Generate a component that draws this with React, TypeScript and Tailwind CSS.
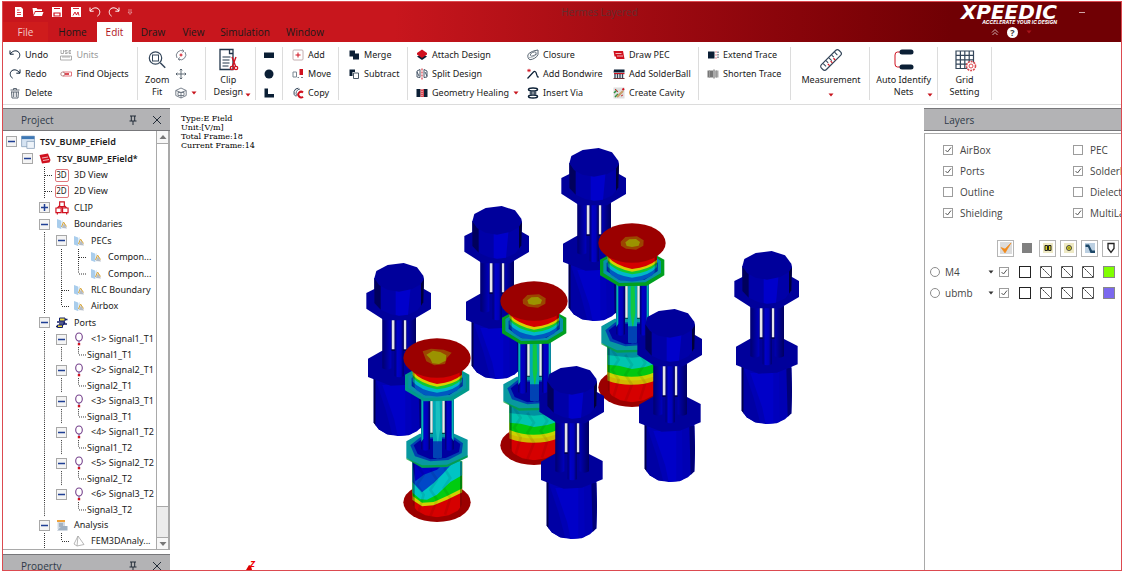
import type { ReactNode } from "react";

const navy = "#0b1f35";
const red = "#d0111f";

type IconProps = { children: ReactNode; size?: string; box?: string };

const Icon = ({ children, size = "size-3", box = "0 0 12 12" }: IconProps) => (
  <svg viewBox={box} className={`${size} shrink-0`} fill="none" aria-hidden="true">
    {children}
  </svg>
);

const UndoIcon = ({ color = navy }) => (
  <Icon>
    <path d="M1 1.500v3.700h3.700M1.300 5C3 2.200 6.500.9 9 2.600c2.600 1.800 2.300 5.800-.6 7.600" stroke={color} />
  </Icon>
);

const RedoIcon = ({ color = navy }) => (
  <Icon>
    <path d="M11 1.500v3.700H7.300M10.700 5C9 2.200 5.500.9 3 2.600.4 4.400.7 8.400 3.600 10.200" stroke={color} />
  </Icon>
);

const Caret = ({ color = "#c8141d" }) => (
  <Icon size="size-1.5" box="0 0 6 6">
    <path d="M.5 1.500h5L3 4.500z" fill={color} />
  </Icon>
);

const icons = {
  trash: (
    <Icon>
      <path d="M1.500 3h9M4.500 3V1.500h3V3M2.500 4.500l.5 6.500h6l.5-6.500M4.700 5v5M7.300 5v5M2.500 5h7" stroke="#5c6773" />
    </Icon>
  ),
  units: (
    <Icon>
      <path d="M1 1v3.500h2.500V1M7.500 1.500H5V3h2.200v1.500H5M11 4.500H9v-3h2M9 3h2" stroke="#999" strokeWidth=".8" />
      <path d="M.5 7h11v4H.5zM3 7v2M5 7v2M7 7v2M9 7v2" stroke="#999" strokeWidth=".8" />
    </Icon>
  ),
  find: (
    <Icon>
      <path d="M3 4h8.500v4H3" stroke="#e2777e" />
      <circle cx="2.800" cy="6" r="2" stroke="#b88" />
      <path d="M5 6h4" stroke={red} strokeWidth="1.500" />
    </Icon>
  ),
  rotate: (
    <Icon>
      <path d="M2 9a5 5 0 0 1 6.500-7M10 3a5 5 0 0 1-6.500 7.200" stroke="#6b7480" strokeWidth=".9" />
      <path d="M7 .5l2 1.500-1.500 1.500M5 8.500L3 10l2 1.500" stroke="#6b7480" strokeWidth=".8" />
      <path d="M6 4.500v3M4.500 6h3" stroke={red} />
    </Icon>
  ),
  pan: (
    <Icon>
      <path d="M6 1v10M1 6h10M4.700 2.300L6 1l1.300 1.300M4.700 9.700L6 11l1.300-1.300M2.300 4.700L1 6l1.300 1.300M9.700 4.700L11 6 9.700 7.300" stroke="#4f5b68" strokeWidth=".9" />
    </Icon>
  ),
  cube: (
    <Icon>
      <path d="M.8 3.500L6 1l5.200 2.500v5L6 11 .8 8.500zM.8 3.500L6 5.500l5.200-2M6 5.500V11M3 5.500h6v3H3z" stroke="#6b7480" strokeWidth=".9" />
    </Icon>
  ),
  rect: <Icon><path d="M1 3.500h10v5.500H1z" fill={navy} /></Icon>,
  circle: <Icon><circle cx="6" cy="6" r="4.500" fill={navy} /></Icon>,
  ell: <Icon><path d="M1.500 1.500H5v5.500h6v3.500H1.500z" fill={navy} /></Icon>,
  add: (
    <Icon>
      <rect x="1" y="1" width="10" height="10" rx="1" stroke="#b59a9d" strokeWidth=".8" />
      <path d="M6 3.500v5M3.500 6h5" stroke={red} />
    </Icon>
  ),
  move: (
    <Icon>
      <path d="M1 4h3.500v5H1z" stroke="#7b8791" />
      <path d="M7.500 1H11v6H7.500z" fill={red} />
      <path d="M5.500 9.500h1.500M9 9.500h2" stroke="#7b8791" />
    </Icon>
  ),
  copy: (
    <Icon>
      <path d="M6.500 1.200A4.500 4.500 0 0 0 4 9.500" stroke="#34465a" />
      <path d="M8 2A4.300 4.300 0 0 0 5 9" stroke="#34465a" strokeWidth=".8" />
      <path d="M11 5.500A2.800 2.800 0 1 0 11 9.700" stroke={red} strokeWidth="2" />
    </Icon>
  ),
  merge: <Icon><path d="M1.500 1.500H7V4.500h4v6H5V7.500H1.500z" fill={navy} /></Icon>,
  subtract: (
    <Icon>
      <path d="M1.500 1.500H7V4H4.500v4h-3z" fill={navy} />
      <path d="M5.500 5h5v5.500h-5z" stroke="#4a5866" />
    </Icon>
  ),
  attach: (
    <Icon>
      <path d="M1 7.500L6 11l5-3.500L6 5z" fill={navy} />
      <path d="M1 4l5-3.500L11 4v1.500L6 9 1 5.500z" fill={red} />
    </Icon>
  ),
  split: (
    <Icon>
      <path d="M1 3l3-1.500v8L1 9zM8 1.500L11 3v6L8 9.500zM1 4l2 4M9 4l2 4" stroke="#34465a" strokeWidth=".9" />
      <path d="M6 .5v11" stroke={red} strokeDasharray="2 1" />
    </Icon>
  ),
  healing: (
    <Icon>
      <path d="M.5 2h4v8h-4zM8 2h3.500v8H8z" fill={navy} />
      <path d="M4.500 2H8v8H4.500z" fill="#d94b55" />
      <path d="M6 2v8" stroke="#fff" strokeDasharray="1 1" strokeWidth=".8" />
    </Icon>
  ),
  closure: (
    <Icon>
      <path d="M1 5.500C3 3 7 1.500 11 1v4.500c-1 3-5 5-8 5.200-2-.7-2.500-3-2-5.200z" stroke="#566370" />
      <ellipse cx="6.300" cy="5" rx="3.200" ry="1.700" transform="rotate(-25 6.300 5)" stroke="#566370" strokeWidth=".8" />
      <path d="M2 8.500c3 0 6-1 8.500-4" stroke="#96a0a8" strokeWidth=".8" />
    </Icon>
  ),
  bondwire: (
    <Icon>
      <path d="M.5 10.500L6.500 4c1-1 2-.5 2.500.5l1.500 4.500h1.500" stroke={navy} strokeWidth="1.200" />
      <path d="M2 .8v3.400M.3 2.500h3.400M.8 1.300l2.400 2.400M3.200 1.300L.8 3.700" stroke={red} strokeWidth=".8" />
    </Icon>
  ),
  via: (
    <Icon>
      <ellipse cx="6" cy="2.500" rx="4.500" ry="1.500" stroke={navy} strokeWidth="1.500" />
      <ellipse cx="6" cy="9.500" rx="4.500" ry="1.500" stroke={navy} strokeWidth="1.500" />
      <path d="M4 4v4M8 4v4M2.500 6h7" stroke={navy} />
    </Icon>
  ),
  pec: (
    <Icon>
      <path d="M.5 2h9.500L11.500 10H3.500L2.800 7.500H1.500z" fill={red} />
      <path d="M2.500 4.500h6M4 7h6" stroke="#fff" strokeWidth=".7" />
    </Icon>
  ),
  solder: (
    <Icon>
      <path d="M1 1.500h10.500v3H.5z" fill={navy} />
      <path d="M1 5h10.500v1.200H1z" fill={red} />
      <path d="M2 6v4M4.500 6v4M7 6v4M9.500 6v4" stroke="#34465a" strokeWidth="1.400" />
      <path d="M.5 10.500h11" stroke="#6b3338" />
    </Icon>
  ),
  cavity: (
    <Icon>
      <rect x=".5" y=".5" width="11" height="11" fill="#dedede" />
      <path d="M2 10l3-3M1 6l3-3" stroke="#2d9140" strokeWidth="1.500" />
      <path d="M4 10l6-6" stroke="#c9a06a" strokeWidth="2.200" />
      <path d="M2 2l3 3M8 9l2-1" stroke="#c33" />
      <path d="M9.500 3l1.500-1.500" stroke={red} strokeWidth="2" />
    </Icon>
  ),
  extend: (
    <Icon>
      <path d="M1 2.500h6.500v7H1z" fill={navy} />
      <path d="M9 2.500v1M9 5.500v1M9 8.500v1" stroke={red} />
      <path d="M11 2.500v7" stroke="#34465a" strokeDasharray="1.500 1" />
    </Icon>
  ),
  shorten: (
    <Icon>
      <path d="M.5 2.500H6v7H.5z" fill="#777" />
      <path d="M8 2.500h3.500v7H8z" fill="#aaa" />
      <path d="M7 1.500v9" stroke="#555" />
      <path d="M2.500 2.500v7M9.500 2.500v7" stroke="#999" />
    </Icon>
  ),
  zoomFit: (
    <Icon size="size-5" box="0 0 20 20">
      <circle cx="8.500" cy="8" r="6.200" stroke="#34465a" strokeWidth="1.200" />
      <path d="M13.200 12.700l5 5" stroke="#34465a" strokeWidth="1.500" />
      <rect x="5.500" y="5" width="6" height="6" stroke="#34465a" />
    </Icon>
  ),
  clip: (
    <Icon size="size-6" box="0 0 24 24">
      <path d="M4 1.500h13v20H4zM13.500 1.500v4h3.500" stroke="#22364b" strokeWidth="1.300" />
      <path d="M6.500 9h8M6.500 12h7M6.500 15h7M6.500 18h6" stroke="#22364b" strokeWidth="1.200" />
      <path d="M16 9l3.500 9M20 9l-3.500 9" stroke={red} strokeWidth="1.400" />
      <circle cx="16" cy="20" r="1.700" stroke={red} strokeWidth="1.300" />
      <circle cx="20" cy="20" r="1.700" stroke={red} strokeWidth="1.300" />
    </Icon>
  ),
  ruler: (
    <Icon size="size-6" box="0 0 24 24">
      <g transform="rotate(-45 12 12)">
        <rect x="-.5" y="8.500" width="25" height="7" rx="2.500" stroke="#34465a" strokeWidth="1.200" />
        <path d="M4 9v4M8 9v3M12 9v4M16 9v3M20 9v4" stroke="#34465a" />
        <path d="M7 12.500v2.500M11 12.500v2.500M15 12.500v2.500" stroke={red} strokeWidth="1.200" />
      </g>
    </Icon>
  ),
  nets: (
    <Icon size="size-6" box="0 0 24 24">
      <path d="M8 4H5.500Q3 4 3 7v9q0 3 2.500 3H8" stroke={red} />
      <rect x="7.500" y="1.500" width="14" height="5" rx="2.500" fill={navy} />
      <rect x="7.500" y="16.500" width="14" height="5" rx="2.500" fill={navy} />
    </Icon>
  ),
  gridSetting: (
    <Icon size="size-6" box="0 0 24 24">
      <path d="M3 3h17.500v17.500H3zM7.400 3v17.500M11.800 3v17.500M16.200 3v17.500M3 7.400h17.500M3 11.800h17.500M3 16.200h17.500" stroke="#34465a" strokeWidth="1.200" />
      <circle cx="18" cy="18" r="4.500" fill="#fff" stroke="#dc4a50" strokeWidth="1.600" strokeDasharray="2 .9" />
      <circle cx="18" cy="18" r="2" stroke="#dc4a50" />
    </Icon>
  ),
};

const RibbonButton = ({ icon, label, muted, caret }: { icon: ReactNode; label: string; muted?: boolean; caret?: boolean }) => (
  <button type="button" className={`flex h-[19px] items-center gap-1 whitespace-nowrap ${muted ? "text-[#9a9a9a]" : ""}`}>
    {icon}
    {label}
    {caret && <Caret />}
  </button>
);

const LargeButton = ({ icon, lines }: { icon: ReactNode; lines: string[] }) => (
  <button type="button" className="flex flex-col items-center leading-3 whitespace-nowrap">
    <span className="flex h-[29px] items-center">{icon}</span>
    {lines.map((line) => (
      <span key={line}>{line}</span>
    ))}
  </button>
);

const IconButton = ({ label, children }: { label: string; children: ReactNode }) => (
  <button type="button" aria-label={label} className="flex h-[19px] items-center">
    {children}
  </button>
);

const Divider = () => <div className="my-1 w-px shrink-0 bg-[#dcdcdc]" />;

const Ribbon = () => (
  <div className="flex h-[63px] shrink-0 overflow-hidden border-b border-[#dcdcdc] bg-white pt-px font-['Noto_Sans',sans-serif] text-[9px]">
    <div className="flex w-[134px] shrink-0 gap-2 pt-0.5 pl-1.5">
      <div>
        <RibbonButton icon={<UndoIcon />} label="Undo" />
        <RibbonButton icon={<RedoIcon />} label="Redo" />
        <RibbonButton icon={icons.trash} label="Delete" />
      </div>
      <div>
        <RibbonButton icon={icons.units} label="Units" muted />
        <RibbonButton icon={icons.find} label="Find Objects" />
      </div>
    </div>
    <Divider />
    <div className="flex w-[67px] shrink-0 gap-1.5 pt-0.5 pl-[7px]">
      <LargeButton icon={icons.zoomFit} lines={["Zoom", "Fit"]} />
      <div>
        <IconButton label="Rotate">{icons.rotate}</IconButton>
        <IconButton label="Pan">{icons.pan}</IconButton>
        <button type="button" aria-label="View cube" className="flex h-[19px] items-center gap-1">
          {icons.cube}
          <Caret />
        </button>
      </div>
    </div>
    <Divider />
    <div className="flex w-[49px] shrink-0 items-end justify-end gap-0.5 self-start pt-0.5 pr-1">
      <LargeButton icon={icons.clip} lines={["Clip", "Design"]} />
      <Caret />
    </div>
    <Divider />
    <div className="flex w-[26px] shrink-0 flex-col items-center pt-0.5">
      <IconButton label="Rectangle">{icons.rect}</IconButton>
      <IconButton label="Circle">{icons.circle}</IconButton>
      <IconButton label="Polygon">{icons.ell}</IconButton>
    </div>
    <Divider />
    <div className="w-[55px] shrink-0 pt-0.5 pl-[9px]">
      <RibbonButton icon={icons.add} label="Add" />
      <RibbonButton icon={icons.move} label="Move" />
      <RibbonButton icon={icons.copy} label="Copy" />
    </div>
    <Divider />
    <div className="w-[68px] shrink-0 pt-0.5 pl-[9px]">
      <RibbonButton icon={icons.merge} label="Merge" />
      <RibbonButton icon={icons.subtract} label="Subtract" />
    </div>
    <Divider />
    <div className="flex w-[290px] shrink-0 pt-0.5 pl-2">
      <div className="w-[111px]">
        <RibbonButton icon={icons.attach} label="Attach Design" />
        <RibbonButton icon={icons.split} label="Split Design" />
        <RibbonButton icon={icons.healing} label="Geometry Healing" caret />
      </div>
      <div className="w-[86px]">
        <RibbonButton icon={icons.closure} label="Closure" />
        <RibbonButton icon={icons.bondwire} label="Add Bondwire" />
        <RibbonButton icon={icons.via} label="Insert Via" />
      </div>
      <div>
        <RibbonButton icon={icons.pec} label="Draw PEC" />
        <RibbonButton icon={icons.solder} label="Add SolderBall" />
        <RibbonButton icon={icons.cavity} label="Create Cavity" />
      </div>
    </div>
    <Divider />
    <div className="w-[91px] shrink-0 pt-0.5 pl-2">
      <RibbonButton icon={icons.extend} label="Extend Trace" />
      <RibbonButton icon={icons.shorten} label="Shorten Trace" />
    </div>
    <Divider />
    <div className="flex w-[78px] shrink-0 flex-col items-center pt-0.5 pl-0.5">
      <LargeButton icon={icons.ruler} lines={["Measurement"]} />
      <span className="flex h-3 items-end">
        <Caret />
      </span>
    </div>
    <Divider />
    <div className="flex w-[67px] shrink-0 items-end justify-end self-start pt-0.5 pr-1">
      <LargeButton icon={icons.nets} lines={["Auto Identify", "Nets"]} />
      <span className="-ml-1">
        <Caret />
      </span>
    </div>
    <Divider />
    <div className="flex w-[53px] shrink-0 justify-center pt-0.5">
      <LargeButton icon={icons.gridSetting} lines={["Grid", "Setting"]} />
    </div>
    <Divider />
  </div>
);

const tabs = [
  { name: "File", style: "w-[45px] bg-[#cf1c1c] text-[#f3c9c9]" },
  { name: "Home", style: "w-[49px]" },
  { name: "Edit", style: "w-[35px] bg-white text-[#b0141b]" },
  { name: "Draw", style: "w-[42px]" },
  { name: "View", style: "w-[39px]" },
  { name: "Simulation", style: "w-16" },
  { name: "Window", style: "w-14" },
];

const quickActions = [
  {
    label: "New",
    icon: (
      <Icon>
        <path d="M2 1h6l2 2v8H2z" fill="#fff" />
        <path d="M4 4h2.500M4 6.500h4M4 8.500h4" stroke={red} strokeWidth=".8" />
      </Icon>
    ),
  },
  {
    label: "Open",
    icon: (
      <Icon>
        <path d="M.5 2H4.500l1 1.200H10V5H3L1.500 9z" fill="#fff" />
        <path d="M3.500 6h8L10 10H1.500z" fill="#fff" />
      </Icon>
    ),
  },
  {
    label: "Save",
    icon: (
      <Icon>
        <path d="M1 1h10v10H1z" fill="#fff" />
        <path d="M3 2.500h6M3 7h6v3H3z" stroke={red} strokeWidth="1.200" />
      </Icon>
    ),
  },
  {
    label: "Save as",
    icon: (
      <Icon>
        <path d="M1 1h10v10H1z" fill="#fff" />
        <path d="M3 2.500h6M3 9.500L5 6l1.500 3L8 6l1 3.500" stroke={red} strokeWidth=".9" />
      </Icon>
    ),
  },
  { label: "Undo", icon: <UndoIcon color="#fff" /> },
  { label: "Redo", icon: <RedoIcon color="#fff" /> },
];

const TitleBar = () => (
  <header className="h-10 shrink-0 bg-linear-to-r from-[#c8161d] from-35% to-[#700004] to-85%">
    <div className="flex h-5 items-center gap-[7px] pl-2.5">
      {quickActions.map((action) => (
        <button key={action.label} type="button" aria-label={action.label}>
          {action.icon}
        </button>
      ))}
      <button type="button" aria-label="Customize">
        <Icon size="size-1.5" box="0 0 6 6">
          <path d="M1 1h4M1 3h4L3 5.500z" stroke="#e9a0a3" strokeWidth=".8" />
        </Icon>
      </button>
      <h1 className="flex-1 pl-28 text-center text-[#632e30]">Hermes Layered</h1>
      <div className="flex w-[167px] items-start justify-between self-start pr-9 text-white">
        <div className="flex w-[103px] flex-col items-end pt-0.5 italic">
          <div className="font-['DejaVu_Sans',sans-serif] text-[20px] leading-4 font-bold">XPEEDIC</div>
          <div className="font-['Inter',sans-serif] text-[5px] leading-[5px] font-bold">ACCELERATE YOUR IC DESIGN</div>
        </div>
        <button type="button" aria-label="Minimize" className="mt-2.5 h-px w-1.5 bg-[#cfa5a6]" />
      </div>
    </div>
    <nav className="flex h-5 items-stretch">
      {tabs.map((tab) => (
        <button key={tab.name} type="button" className={`shrink-0 ${tab.style}`}>
          {tab.name}
        </button>
      ))}
      <div className="ml-auto flex items-center gap-2 pr-[89px]">
        <button type="button" aria-label="Collapse ribbon">
          <Icon size="size-2" box="0 0 8 8">
            <path d="M1 4.500L4 1.500l3 3M1.500 7L4 4.500 6.500 7" stroke="#ccb0b0" />
          </Icon>
        </button>
        <button
          type="button"
          aria-label="Help"
          className="grid size-[11px] place-items-center rounded-full bg-white text-[9px] leading-none font-bold text-[#3a3a3a]"
        >
          ?
        </button>
        <Caret color="#a8141b" />
      </div>
    </nav>
  </header>
);

const PanelHeader = ({ title, pinned }: { title: string; pinned?: boolean }) => (
  <div
    className={`flex h-[23px] shrink-0 items-center border-y border-[#77777a] bg-[#b3b3b5] text-[#2f3a48] ${pinned ? "pl-[18px]" : "pl-5"}`}
  >
    <h2 className="flex-1">{title}</h2>
    {pinned && (
      <div className="flex gap-3 pr-[7px]">
        <button type="button" aria-label={`Pin ${title}`}>
          <Icon>
            <path d="M3 2h6M4.300 2v5M7.700 2v5M2.500 7h7M6 7v4" stroke="#222c38" />
          </Icon>
        </button>
        <button type="button" aria-label={`Close ${title}`}>
          <Icon>
            <path d="M2 2l8 8M10 2l-8 8" stroke="#222c38" />
          </Icon>
        </button>
      </div>
    )}
  </div>
);

const folder = (
  <Icon>
    <path d="M1 1l4 1.500V11L1 9.500z" fill="#a9cdec" />
    <path d="M5 3l2-1v8L5 11z" fill="#dcebf7" />
    <path d="M6 10l2-5 3 5.500z" fill="#b4bcc6" />
    <path d="M5.500 9l2-5 3 4.500" stroke="#d9a63a" />
  </Icon>
);

const port = (
  <Icon size="size-3.5" box="0 0 14 14">
    <ellipse cx="7" cy="5" rx="3.300" ry="4" stroke="#75418c" strokeWidth="1.100" />
    <path d="M7 9v2" stroke="#75418c" />
    <path d="M5.800 11h2.400v2.300H5.800z" fill={red} />
  </Icon>
);

const badge = (text: string) => (
  <span className="grid h-[13px] w-3.5 shrink-0 place-items-center rounded-xs border border-[#e0777d] text-[8px] leading-none">
    {text}
  </span>
);

// One character per 17px column: m/p = expander, | = line, t = tee, e = elbow
type TreeRow = { lines: string; label: string; icon?: ReactNode; bold?: boolean; height?: string };

const signals = ["Signal1_T1", "Signal2_T1", "Signal3_T1", "Signal1_T2", "Signal2_T2", "Signal3_T2"];

const treeRows: TreeRow[] = [
  {
    lines: "m",
    label: "TSV_BUMP_EField",
    bold: true,
    height: "h-[17px]",
    icon: (
      <Icon size="size-3.5">
        <path d="M.5 1h11v9H.5z" fill="#d5e3f2" stroke="#8ba3bd" strokeWidth=".7" />
        <path d="M.5 1h11v2.500H.5z" fill="#3e78b5" />
        <path d="M5 5.500h6.500v6H5z" fill="#eef4fa" stroke="#7e98b4" strokeWidth=".6" />
      </Icon>
    ),
  },
  {
    lines: " m",
    label: "TSV_BUMP_EField*",
    bold: true,
    height: "h-[17px]",
    icon: (
      <Icon>
        <path d="M.5 2L9 .5l2.500 6.500-1 2.500-7.500 1z" fill={red} />
        <path d="M3 5l6-1M4 7.500l6-1" stroke="#fff" strokeWidth=".7" />
      </Icon>
    ),
  },
  { lines: "  t", label: "3D View", icon: badge("3D") },
  { lines: "  t", label: "2D View", icon: badge("2D") },
  {
    lines: "  p",
    label: "CLIP",
    height: "h-[17px]",
    icon: (
      <Icon size="size-3.5">
        <path d="M4 .8h4v4H4zM.8 6h4.500v4H.8zM6.500 6h4.700v4H6.500zM2 6l2-2M10 6L8 4M2 10v1.500M10 10v1.500M6 5v1" stroke={red} />
      </Icon>
    ),
  },
  { lines: "  m", label: "Boundaries", icon: folder },
  { lines: "  |m", label: "PECs", icon: folder, height: "h-[17px]" },
  { lines: "  ||t", label: "Compon...", icon: folder },
  { lines: "  ||e", label: "Compon...", icon: folder, height: "h-[17px]" },
  { lines: "  |t", label: "RLC Boundary", icon: folder },
  { lines: "  |e", label: "Airbox", icon: folder },
  {
    lines: "  m",
    label: "Ports",
    height: "h-[17px]",
    icon: (
      <Icon>
        <path d="M3.500 1h5.500v3H3.500zM1.500 8h5v2.500h-5z" fill="#f0dc3c" stroke="#15206a" />
        <path d="M1 5h8M3 7h8M9 2.500h2.500M0 9.500h2M9 5l-2 3" stroke="#15206a" strokeWidth="1.400" />
      </Icon>
    ),
  },
  ...signals.flatMap((name, i) => [
    { lines: "  |m", label: `<${i + 1}> ${name}`, icon: port },
    { lines: i === signals.length - 1 ? "  | e" : "  ||e", label: name, height: "h-[15px]" },
  ]),
  {
    lines: "  m",
    label: "Analysis",
    icon: (
      <Icon>
        <path d="M1 1h8v2H1z" fill="#efa23a" />
        <path d="M1.500 3h7.500v7h-7.500z" fill="#cfd8e2" />
        <path d="M3 5h4M3 7h4" stroke="#7e8c9b" />
        <path d="M6 7h5.500v4.500H1z" fill="#9fb0c2" />
      </Icon>
    ),
  },
  {
    lines: "  |e",
    label: "FEM3DAnaly...",
    icon: (
      <Icon>
        <path d="M5 1l6 8.500L4 11zM5 1L1 9l3 2" stroke="#a5a5a5" strokeWidth=".8" />
      </Icon>
    ),
  },
];

const TreeColumn = ({ kind, first }: { kind: string; first: boolean }) => {
  const expander = kind === "m" || kind === "p";
  return (
    <span className={`flex h-full shrink-0 items-center justify-center ${first ? "w-4" : "w-[17px]"}`}>
      {expander && (
        <button
          type="button"
          aria-label={kind === "m" ? "Collapse" : "Expand"}
          className="grid size-[11px] place-items-center border border-[#a8a8a8] bg-[#f4f4f4]"
        >
          <Icon size="size-[9px]" box="0 0 9 9">
            <path d={kind === "m" ? "M1 4.500h7" : "M1 4.500h7M4.500 1v7"} stroke="#1f3f94" strokeWidth="1.500" />
          </Icon>
        </button>
      )}
      {"|te".includes(kind) && (
        <svg viewBox="0 0 17 16" preserveAspectRatio="none" className="h-full w-full" fill="none" aria-hidden="true">
          <path d={kind === "e" ? "M8.500 0v8" : "M8.500 0v16"} stroke="#333" strokeDasharray="1 1" />
          {kind !== "|" && <path d="M9 8.500h8" stroke="#333" strokeDasharray="1 1" />}
        </svg>
      )}
    </span>
  );
};

const ProjectTree = () => (
  <ul className="flex-1 overflow-hidden pt-0.5 font-['Noto_Sans',sans-serif] text-[9px]">
    {treeRows.map((row, i) => (
      <li key={i} className={`flex items-center whitespace-nowrap ${row.height ?? "h-4"}`}>
        {row.lines.split("").map((kind, col) => (
          <TreeColumn key={col} kind={kind} first={col === 0} />
        ))}
        {row.icon && <span className="mr-1 flex w-[17px] shrink-0 justify-center">{row.icon}</span>}
        <span className={row.bold ? "font-semibold" : ""}>{row.label}</span>
      </li>
    ))}
  </ul>
);

const ScrollBar = () => (
  <div className="flex w-[13px] shrink-0 flex-col border-x border-[#a9a9a9] bg-[#ececec]">
    <button type="button" aria-label="Scroll up" className="grid h-[13px] place-items-center border-b border-[#a9a9a9] bg-[#f7f7f7]">
      <Icon size="size-2" box="0 0 8 8">
        <path d="M.5 6L4 2l3.500 4z" fill="#777" />
      </Icon>
    </button>
    <div className="grow-[12] border-b border-[#a9a9a9] bg-white" />
    <div className="grow" />
    <button type="button" aria-label="Scroll down" className="grid h-3 place-items-center border-t border-[#a9a9a9] bg-[#f7f7f7]">
      <Icon size="size-2" box="0 0 8 8">
        <path d="M.5 2L4 6l3.500-4z" fill="#777" />
      </Icon>
    </button>
  </div>
);

// Pillars are drawn in units of a third of a pixel
const ColdPillar = ({ x, y }: { x: number; y: number }) => (
  <g transform={`translate(${x} ${y}) scale(.3333)`}>
    <path d="M-76 340V479L-61 499-36 514-4 519 29 517 54 505 73 487 75 420 73 340z" fill="#0000b4" />
    <path d="M-76 340V479L-70 487V340z" fill="#00004a" />
    <path d="M-70 350L-40 440-20 517-36 514-61 499-70 487z" fill="#0000a4" />
    <path d="M-50 366H20V517L-4 519-14 470z" fill="#0000c8" />
    <path d="M20 360H36L38 513 20 517z" fill="#0000bc" />
    <path d="M58 350H73L75 420 73 487 62 498z" fill="#000078" />
    <path d="M-93 287L-52 264-30 257H30L51 264 92 285V340L30 365-25 368-93 342z" fill="#00009b" />
    <path d="M-49 165V264L51 264V165z" fill="#000050" />
    <path d="M-22 165h9v94h-9zM14 165h8v94h-8z" fill="#e4e4ea" />
    <path d="M-50 165h27V316q-13 8-27 0zM23 165h28V316q-13 8-28 0z" fill="url(#pin)" />
    <path d="M-13 165h27V340q-13 6-27 0z" fill="url(#pin)" />
    <path d="M-98 90L-74 78H75L96 90V138L50 165 40 172H-45L-50 168-98 137z" fill="#00009b" />
    <path d="M-74 46V120L-55 140-25 154 0 158 27 155 55 142 73 118 75 48z" fill="#0000a8" />
    <path d="M-74 46V120L-55 140V60z" fill="#00005c" />
    <path d="M-10 70H35L27 155 0 158-10 156z" fill="#0000cb" />
    <path d="M66 55L75 48 73 118 66 128z" fill="#00003a" />
    <path d="M-74 46L-68 24-34 6 14 0 54 13 73 38 75 48 65 64 40 78 0 86-35 80-60 66z" fill="#00009b" />
  </g>
);

const HotPillar = ({ x, y, slanted }: { x: number; y: number; slanted?: boolean }) => (
  <g transform={`translate(${x} ${y}) scale(.3333)`}>
    <ellipse cy="433" rx="101" ry="59" fill="#9b0000" />
    <g clipPath="url(#body)">
      <path d="M-76 300H78V490H-76z" fill="#d60000" />
      {slanted ? (
        <>
          <path d="M-76 300H78V402L30 425-10 442-45 445-76 425z" fill="#cfd200" />
          <path d="M-76 300H78V390L30 414-10 432-45 434-76 412z" fill="#00cc10" />
          <path d="M-76 300H78V350L40 372 0 410-30 425-50 424-76 402z" fill="#00c4c4" />
          <path d="M-76 300H60L20 345-10 375-45 403-76 370z" fill="#0048c8" />
          <path d="M-76 300H40L0 335-40 350-65 370z" fill="#0000c4" />
        </>
      ) : (
        <>
          <path d="M-76 300H78V410Q0 440-76 412z" fill="#cfb800" />
          <path d="M-76 300H78V396Q0 428-76 398z" fill="#c8d400" />
          <path d="M-76 300H78V384Q0 418-76 386z" fill="#00c810" />
          <path d="M-76 300H78V360L40 372 0 378-40 368-76 365z" fill="#00c4b0" />
          <path d="M-76 300H78V336L0 344-76 336z" fill="#0090a0" />
        </>
      )}
      <path
        d="M-60 320l20 30-20 30 20 30-18 60M-20 335l20 30-20 30 20 30-20 50M22 330l18 30-20 30 20 30-16 50"
        stroke="#000"
        strokeOpacity=".08"
        strokeWidth="8"
        fill="none"
      />
      <path d="M-76 300h9v190h-9zM69 300h9v190h-9z" fill="#000" fillOpacity=".35" />
    </g>
    <path d="M-92 250L-52 227H52L92 245V298L30 327-45 329-92 300z" fill="#0898a0" />
    <path d="M-92 300L-45 322 30 320 92 292V298L30 327-45 329-92 304z" fill="#00a030" fillOpacity=".7" />
    <path d="M-80 262L-50 238H52L78 256 74 285 34 306-20 310-66 295z" fill="#0040b0" />
    <path d="M-70 262L-45 242H48L70 258 66 282 26 300-20 304-58 288z" fill="#0000a0" />
    <path d="M-48 120H50V228H-48z" fill="#034c55" />
    <path d="M-20 120h7v104h-7zM16 120h7v104h-7z" fill="#e6ecec" />
    <path d="M-47 120h26V274q-13 8-26 0z" fill="url(#pin)" />
    <path d="M24 120h26V274q-13 8-26 0z" fill="url(#pin)" />
    <path d="M-47 120h6V242l-6 10zM44 120h6v130l-6-10z" fill="#00b4b4" />
    <path d="M-12 120h27V298q-13 6-27 0z" fill="#00a8b4" />
    <path d="M-4 130h12l2 80-8 50-6-50z" fill={slanted ? "#18c0c0" : "#10c840"} />
    <path d="M-12 250h27V298q-13 6-27 0z" fill="#0018b4" fillOpacity=".7" />
    <path d="M-96 50L-74 38H75L97 50V97L45 128-40 130-96 97z" fill={slanted ? "#009a8c" : "#00a020"} />
    <path d="M-86 54L-66 42H70L87 54V90L40 118-38 120-86 90z" fill="#0890a8" />
    <path d="M-76 60L-60 45H66L77 60V84L38 110-36 112-76 84z" fill="#0018a8" />
    <g clipPath="url(#cap)">
      <path d="M-74 20H75V118H-74z" fill="#0058c0" />
      <path d="M-74 20H75V72Q50 100 0 104-50 98-74 70z" fill="#00b8c8" />
      <path d="M-74 20H75V64Q50 90 0 94-50 86-74 58z" fill="#10c830" />
      <path d="M-74 20H75V58Q50 80 0 86-50 76-74 50z" fill="#d8d000" />
      <path d="M-74 20H75V50Q50 72 0 78-50 68-74 40z" fill="#d40000" />
      <path d="M-74 20h7v80h-7zM68 20h7v80h-7z" fill="#000" fillOpacity=".3" />
    </g>
    <ellipse rx="101" ry="59" fill="#9b0000" />
    {slanted ? (
      <>
        <path d="M-43-20L-18-28 20-25 44-16 30 0 24 18-8 22-32 10z" fill="#9b4500" />
        <path d="M-32-10L-12-22 10-18 28-8 26 8 6 18-14 16-20 2z" fill="#9b9300" />
      </>
    ) : (
      <>
        <path d="M-34-4L-20-18 15-20 35-8 34 8 12 20-18 17-33 8z" fill="#9b4500" />
        <path d="M-20-2L-8-11 12-12 24-3 20 8 0 12-16 9z" fill="#9b9300" />
      </>
    )}
  </g>
);

const Viewport = () => (
  <main className="relative min-w-0 flex-1 overflow-hidden bg-white">
    <svg viewBox="169 105 754 465" preserveAspectRatio="xMidYMid meet" className="block h-full w-full" role="img" aria-label="E field plot">
      <defs>
        <linearGradient id="pin">
          <stop offset="0" stopColor="#000070" />
          <stop offset=".3" stopColor="#0000c8" />
          <stop offset=".7" stopColor="#0000b8" />
          <stop offset="1" stopColor="#000060" />
        </linearGradient>
        <clipPath id="cap">
          <path d="M-74 20H75V80L60 98 30 112 0 116-40 110-62 96-74 78z" />
        </clipPath>
        <clipPath id="body">
          <path d="M-74 310H76V440L62 458 35 472 0 478-35 472-60 458-74 440z" />
        </clipPath>
      </defs>
      <ColdPillar x={593} y={148} />
      <ColdPillar x={496} y={206} />
      <ColdPillar x={398} y={263} />
      <HotPillar x={631} y={243} />
      <HotPillar x={533} y={301} />
      <HotPillar x={436} y={358} slanted />
      <ColdPillar x={766} y={251} />
      <ColdPillar x={669} y={309} />
      <ColdPillar x={571} y={366} />
      <path d="M245 570l3-5 2 1 1 4z" fill="#d00" />
      <text x="249" y="567" fontSize="9" fontWeight="bold" fontStyle="italic" fill="#e00">
        Z
      </text>
    </svg>
    <div className="absolute top-[9px] left-[11px] font-['DejaVu_Serif',serif] text-[8px] leading-[9px] text-black">
      <p>Type:E Field</p>
      <p>Unit:[V/m]</p>
      <p>Total Frame:18</p>
      <p>Current Frame:14</p>
    </div>
  </main>
);

const CheckBox = ({ checked, label }: { checked?: boolean; label?: string }) => (
  <span className="grid shrink-0 place-items-center">
    <input
      type="checkbox"
      defaultChecked={checked}
      aria-label={label}
      className="peer col-start-1 row-start-1 size-[10px] appearance-none border border-[#9c9c9c] bg-white"
    />
    <svg viewBox="0 0 10 10" fill="none" className="pointer-events-none invisible col-start-1 row-start-1 size-[10px] peer-checked:visible">
      <path d="M2.500 5l2 2 3.500-4.500" stroke="#555" />
    </svg>
  </span>
);

const visibility = [
  { name: "AirBox", on: true },
  { name: "PEC", on: false },
  { name: "Ports", on: true },
  { name: "SolderBall", on: true },
  { name: "Outline", on: false },
  { name: "Dielectric", on: false },
  { name: "Shielding", on: true },
  { name: "MultiLayer", on: true },
];

const layerTools = [
  {
    name: "Visible",
    icon: (
      <Icon>
        <path d="M0 0h12v12H0z" fill="#dcdcdc" />
        <path d="M1 5.500L5 11l6-10-6 6z" fill="#f08a1c" stroke="#f08a1c" strokeWidth=".6" />
      </Icon>
    ),
  },
  { name: "Fill", icon: <Icon><path d="M1 1h10v10H1z" fill="#808080" /></Icon> },
  {
    name: "Trace",
    icon: (
      <Icon>
        <path d="M1 1h10v10H1z" fill="#eee9c4" />
        <path d="M3 3.500h2.500v5H3zM6.500 3.500H9v5H6.500z" fill="#d8cf1c" stroke="#222" />
      </Icon>
    ),
  },
  {
    name: "Pad",
    icon: (
      <Icon>
        <path d="M1 1h10v10H1z" fill="#eee9c4" />
        <circle cx="6" cy="6" r="2.500" fill="#e0d820" stroke="#444" />
        <circle cx="6" cy="6" r=".7" fill="#333" />
      </Icon>
    ),
  },
  {
    name: "Shape",
    icon: (
      <Icon>
        <path d="M1 1h10v10H1z" fill="#bcd0e2" />
        <path d="M1.500 2.500H5L8 8.500h3V11H6.500L4 5H1.500z" fill="#1d4868" />
      </Icon>
    ),
  },
  { name: "Color", icon: <Icon><path d="M3 1.500h6v5L6 10.500 3 6.500z" stroke="#222" strokeWidth="1.300" /></Icon> },
];

const layers = [
  { name: "M4", swatch: "bg-[#80ff00]" },
  { name: "ubmb", swatch: "bg-[#7b68ee]" },
];

const LayersPanel = () => (
  <aside className="flex w-[197px] shrink-0 flex-col overflow-hidden pt-[3px]">
    <PanelHeader title="Layers" />
    <div className="mt-0.5 flex-1 border-t border-l border-[#a9a9a9] text-[#444]">
      <div className="ml-[18px] grid w-[240px] grid-cols-[130px_110px] pt-[5px]">
        {visibility.map((item) => (
          <label key={item.name} className="flex h-[21px] items-center gap-[7px]">
            <CheckBox checked={item.on} />
            {item.name}
          </label>
        ))}
      </div>
      <table className="mt-3 w-[196px] table-fixed text-left">
        <thead>
          <tr className="h-[26px]">
            <th className="w-[70px]" aria-label="Layer" />
            {layerTools.map((tool) => (
              <th key={tool.name} className="w-[21px] p-0 pl-0.5">
                <button
                  type="button"
                  aria-label={tool.name}
                  className={`grid size-[17px] place-items-center ${tool.name === "Fill" ? "" : "border border-[#b5b5b5]"}`}
                >
                  {tool.icon}
                </button>
              </th>
            ))}
          </tr>
        </thead>
        <tbody>
          {layers.map((layer) => (
            <tr key={layer.name} className="h-[21px]">
              <td className="p-0">
                <div className="flex items-center gap-[5px] pl-[5px]">
                  <input
                    type="radio"
                    name="layer"
                    id={layer.name}
                    className="size-[10px] shrink-0 appearance-none rounded-full border border-[#8c8c8c]"
                  />
                  <label htmlFor={layer.name} className="flex-1">
                    {layer.name}
                  </label>
                  <span className="pr-px">
                    <Caret color="#333" />
                  </span>
                </div>
              </td>
              <td className="p-0 pl-1">
                <div className="flex">
                  <CheckBox checked label={`Show ${layer.name}`} />
                </div>
              </td>
              <td className="p-0 pl-[3px]">
                <div className="size-[12px] border border-[#222] bg-white" />
              </td>
              {["Trace", "Pad", "Shape"].map((cell) => (
                <td key={cell} className="p-0 pl-[3px]">
                  <Icon>
                    <path d="M.5.5h11v11H.5z" stroke="#555" />
                    <path d="M1 1l10 10" stroke="#222" strokeDasharray="2 1" />
                  </Icon>
                </td>
              ))}
              <td className="p-0 pl-[3px]">
                <div className={`size-[12px] border border-[#888] ${layer.swatch}`} />
              </td>
            </tr>
          ))}
        </tbody>
      </table>
    </div>
  </aside>
);

export default function App() {
  return (
    <div className="h-screen bg-white p-px pr-0.5 pl-0.5 font-['Open_Sans','Noto_Sans',sans-serif] text-[10px] leading-4 text-[#1a1a1a]">
      <div className="flex h-full flex-col border border-[#dc4a50]">
        <TitleBar />
        <Ribbon />
        <div className="flex min-h-0 flex-1">
          <aside className="flex w-[167px] shrink-0 flex-col pt-[3px]">
            <PanelHeader title="Project" pinned />
            <div className="flex min-h-0 flex-1 border-r border-b border-[#a9a9a9]">
              <ProjectTree />
              <ScrollBar />
            </div>
            <div className="mt-1 h-4 shrink-0 overflow-hidden">
              <PanelHeader title="Property" pinned />
            </div>
          </aside>
          <Viewport />
          <LayersPanel />
        </div>
      </div>
    </div>
  );
}
